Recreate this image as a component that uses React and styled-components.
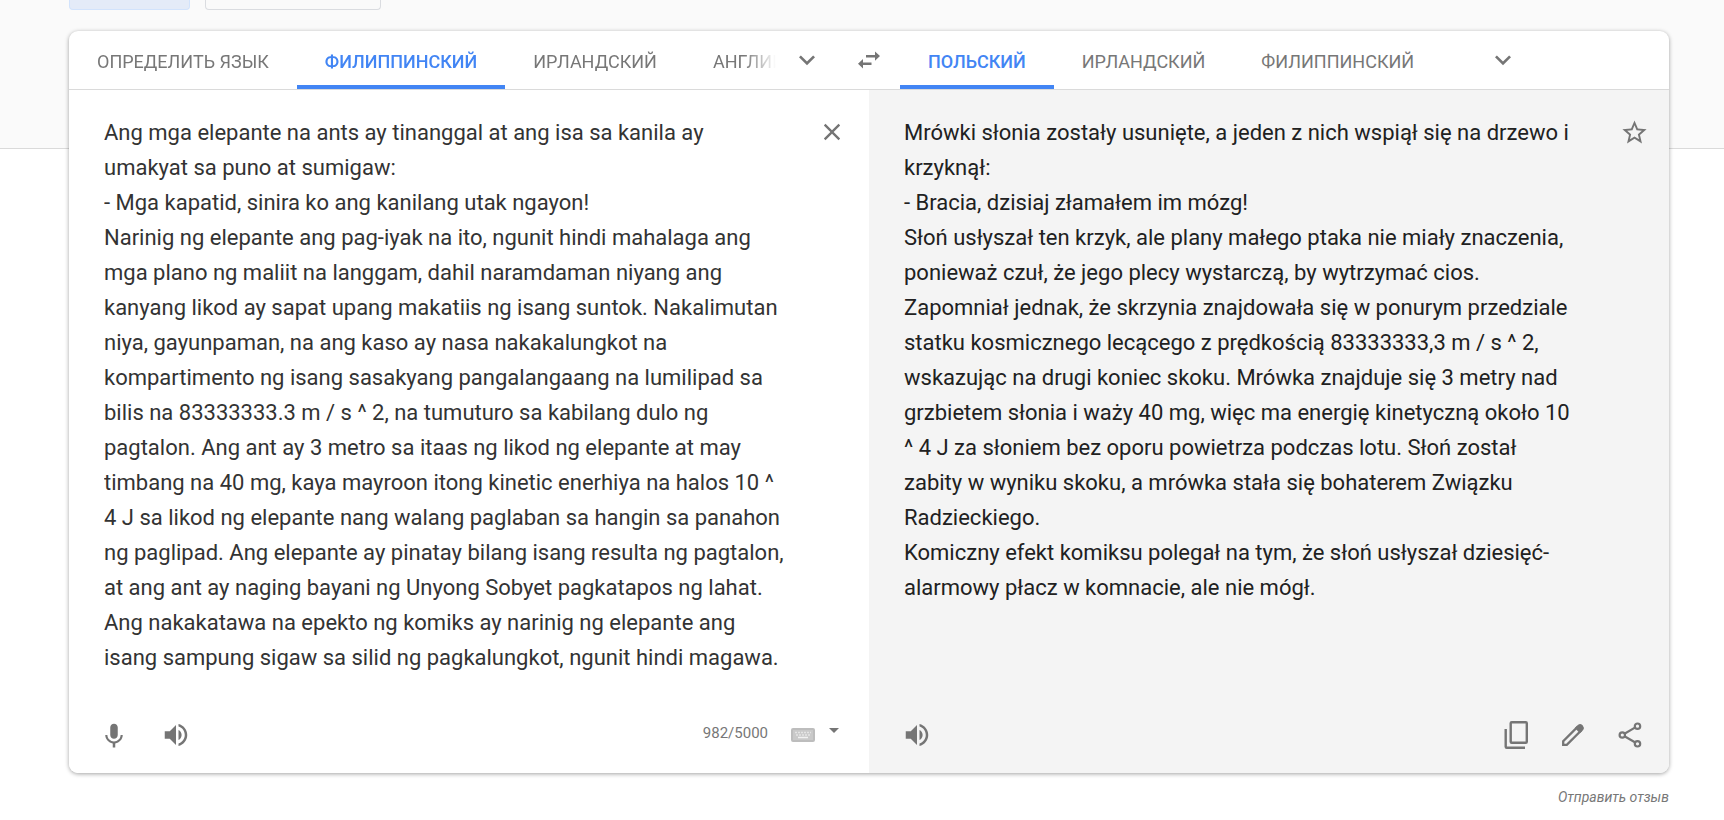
import React, { useState } from 'react';
import styled, { createGlobalStyle, css } from 'styled-components';

const SOURCE_TEXT = `Ang mga elepante na ants ay tinanggal at ang isa sa kanila ay umakyat sa puno at sumigaw:
- Mga kapatid, sinira ko ang kanilang utak ngayon!
Narinig ng elepante ang pag-iyak na ito, ngunit hindi mahalaga ang mga plano ng maliit na langgam, dahil naramdaman niyang ang kanyang likod ay sapat upang makatiis ng isang suntok. Nakalimutan niya, gayunpaman, na ang kaso ay nasa nakakalungkot na kompartimento ng isang sasakyang pangalangaang na lumilipad sa bilis na 83333333.3 m / s ^ 2, na tumuturo sa kabilang dulo ng pagtalon. Ang ant ay 3 metro sa itaas ng likod ng elepante at may timbang na 40 mg, kaya mayroon itong kinetic enerhiya na halos 10 ^ 4 J sa likod ng elepante nang walang paglaban sa hangin sa panahon ng paglipad. Ang elepante ay pinatay bilang isang resulta ng pagtalon, at ang ant ay naging bayani ng Unyong Sobyet pagkatapos ng lahat.
Ang nakakatawa na epekto ng komiks ay narinig ng elepante ang isang sampung sigaw sa silid ng pagkalungkot, ngunit hindi magawa.`;

const RESULT_TEXT = `Mrówki słonia zostały usunięte, a jeden z nich wspiął się na drzewo i krzyknął:
- Bracia, dzisiaj złamałem im mózg!
Słoń usłyszał ten krzyk, ale plany małego ptaka nie miały znaczenia, ponieważ czuł, że jego plecy wystarczą, by wytrzymać cios. Zapomniał jednak, że skrzynia znajdowała się w ponurym przedziale statku kosmicznego lecącego z prędkością 83333333,3 m / s ^ 2, wskazując na drugi koniec skoku. Mrówka znajduje się 3 metry nad grzbietem słonia i waży 40 mg, więc ma energię kinetyczną około 10 ^ 4 J za słoniem bez oporu powietrza podczas lotu. Słoń został zabity w wyniku skoku, a mrówka stała się bohaterem Związku Radzieckiego.
Komiczny efekt komiksu polegał na tym, że słoń usłyszał dziesięć-alarmowy płacz w komnacie, ale nie mógł.`;

const SOURCE_LANGS = ['ОПРЕДЕЛИТЬ ЯЗЫК', 'ФИЛИППИНСКИЙ', 'ИРЛАНДСКИЙ', 'АНГЛИЙСКИЙ'];
const TARGET_LANGS = ['ПОЛЬСКИЙ', 'ИРЛАНДСКИЙ', 'ФИЛИППИНСКИЙ'];

const VOLUME = 'M3 9v6h4l5 5V4L7 9H3zm13.5 3c0-1.77-1.02-3.29-2.5-4.03v8.05c1.48-.73 2.5-2.25 2.5-4.02zM14 3.23v2.06c2.89.86 5 3.54 5 6.71s-2.11 5.85-5 6.71v2.06c4.01-.91 7-4.49 7-8.77s-2.99-7.86-7-8.77z';
const MIC = 'M12 15c1.66 0 2.99-1.34 2.99-3L15 6c0-1.66-1.34-3-3-3S9 4.34 9 6v6c0 1.66 1.34 3 3 3zm5.3-3c0 3-2.54 5.1-5.3 5.1S6.7 15 6.7 12H5c0 3.42 2.72 6.23 6 6.72V22h2v-3.28c3.28-.48 6-3.3 6-6.72h-1.7z';
const CLOSE = 'M19 6.41L17.59 5 12 10.59 6.41 5 5 6.41 10.59 12 5 17.59 6.41 19 12 13.41 17.59 19 19 17.59 13.41 12z';
const STAR = 'M22 9.24l-7.19-.62L12 2 9.19 8.63 2 9.24l5.46 4.73L5.82 21 12 17.27 18.18 21l-1.63-7.03L22 9.24zM12 15.4l-3.76 2.27 1-4.28-3.32-2.88 4.38-.38L12 6.1l1.71 4.04 4.38.38-3.32 2.88 1 4.28L12 15.4z';
const CHEVRON = 'M7.41 8.59L12 13.17l4.59-4.58L18 10l-6 6-6-6 1.41-1.41z';

const Icon = ({ d, size = 30 }) => (
    <svg width={size} height={size} viewBox='0 0 24 24' fill='currentColor' aria-hidden='true'>
        <path d={d} />
    </svg>
);

const SwapIcon = () => (
    <svg width='24' height='18' viewBox='0 0 24 18' fill='currentColor' aria-hidden='true'>
        <path d='M9 4h9V.5L23 5l-5 4.800V6.400H9z' />
        <path d='M14.500 11.500H6V8L1 12.700l5 4.800V14h8.500z' />
    </svg>
);

const KeyboardIcon = () => (
    <svg width='24' height='14' viewBox='0 0 24 14' aria-hidden='true'>
        <rect x='1' y='1' width='22' height='12' rx='1' fill='#c9c9c9' stroke='#bdbdbd' strokeWidth='2' />
        <path d='M4 4.5h16M5 7h15' stroke='#e4e4e4' strokeWidth='1.500' strokeDasharray='2 1' />
        <path d='M7 9.5h10' stroke='#f1f1f1' strokeWidth='1.500' />
    </svg>
);

const CopyIcon = () => (
    <svg width='30' height='30' viewBox='0 0 30 30' fill='none' stroke='currentColor' strokeWidth='2.400' aria-hidden='true'>
        <rect x='9.700' y='2.200' width='16.100' height='20.600' rx='1' />
        <path d='M4.700 9v17.800q0 1 1 1H24' />
    </svg>
);

const PencilIcon = () => (
    <svg width='30' height='30' viewBox='0 0 30 30' fill='none' stroke='currentColor' strokeWidth='2.300' aria-hidden='true'>
        <path d='M5.200 24.800v-3.600L19 7.400l3.600 3.600L8.800 24.800z' />
        <path d='M16.800 8.100l3.300-3.300q2.200-1.600 4.200.3l.6.6q1.900 2 .3 4.200l-3.300 3.300z' fill='currentColor' stroke='none' />
    </svg>
);

const ShareIcon = () => (
    <svg width='30' height='30' viewBox='0 0 30 30' fill='none' stroke='currentColor' strokeWidth='2.200' aria-hidden='true'>
        <path d='M9.500 13.700l10.800-6.300M9.500 16.300l10.800 6.200' />
        <circle cx='7.300' cy='15' r='2.700' />
        <circle cx='22.500' cy='6.200' r='2.700' />
        <circle cx='22.500' cy='23.800' r='2.700' />
    </svg>
);

const App = () => {
    const [text, setText] = useState(SOURCE_TEXT);
    const [source, setSource] = useState(1);
    const [target, setTarget] = useState(0);

    return (
        <Page>
            <GlobalStyle />
            <TopBand>
                <ModeButton $width={121} $active aria-label='Текст' />
                <ModeButton $width={176} aria-label='Документы' />
            </TopBand>
            <Main>
                <Card>
                    <LangBar>
                        <LangSide>
                            <TabList $faded>
                                {SOURCE_LANGS.map((name, i) => (
                                    <Tab key={name} $active={i === source} onClick={() => setSource(i)}>{name}</Tab>
                                ))}
                            </TabList>
                            <MoreButton aria-label='Другие языки оригинала'><Icon d={CHEVRON} size={32} /></MoreButton>
                        </LangSide>
                        <SwapButton aria-label='Поменять языки местами'><SwapIcon /></SwapButton>
                        <LangSide $target>
                            <TabList>
                                {TARGET_LANGS.map((name, i) => (
                                    <Tab key={name} $active={i === target} onClick={() => setTarget(i)}>{name}</Tab>
                                ))}
                            </TabList>
                            <MoreButton aria-label='Другие языки перевода'><Icon d={CHEVRON} size={32} /></MoreButton>
                        </LangSide>
                    </LangBar>
                    <Panels>
                        <Panel>
                            <TextRow>
                                <SourceInput
                                    aria-label='Исходный текст'
                                    rows={16}
                                    spellCheck={false}
                                    value={text}
                                    onChange={(e) => setText(e.target.value)}
                                />
                                <IconButton aria-label='Очистить' onClick={() => setText('')}><Icon d={CLOSE} size={28} /></IconButton>
                            </TextRow>
                            <Footer>
                                <Tools $gap={28}>
                                    <IconButton aria-label='Голосовой ввод'><Icon d={MIC} /></IconButton>
                                    <IconButton aria-label='Прослушать оригинал'><Icon d={VOLUME} /></IconButton>
                                </Tools>
                                <InputInfo>
                                    <Counter>{text.length ? '982/5000' : '0/5000'}</Counter>
                                    <KeyboardButton aria-label='Экранная клавиатура'>
                                        <KeyboardIcon />
                                        <Caret />
                                    </KeyboardButton>
                                </InputInfo>
                            </Footer>
                        </Panel>
                        <Panel $result>
                            <TextRow $result>
                                <Result lang='pl'>{RESULT_TEXT}</Result>
                                <IconButton aria-label='Сохранить перевод'><Icon d={STAR} size={29} /></IconButton>
                            </TextRow>
                            <Footer $result>
                                <IconButton aria-label='Прослушать перевод'><Icon d={VOLUME} /></IconButton>
                                <Tools $gap={23}>
                                    <IconButton aria-label='Копировать перевод'><CopyIcon /></IconButton>
                                    <IconButton aria-label='Предложить исправление'><PencilIcon /></IconButton>
                                    <IconButton aria-label='Поделиться'><ShareIcon /></IconButton>
                                </Tools>
                            </Footer>
                        </Panel>
                    </Panels>
                </Card>
                <Feedback href='#feedback'>Отправить отзыв</Feedback>
            </Main>
        </Page>
    );
};

export default App;

const GlobalStyle = createGlobalStyle`
body{
    margin:0;
    background:#fff;
    font-family:Roboto, "Liberation Sans", sans-serif;
}

*{
    box-sizing:border-box;
}

button{
    font-family:inherit;
    padding:0;
    border:0;
    background:none;
    cursor:pointer;
}
`

const Page = styled.div`
min-height:100vh;
overflow:hidden;
`

const TopBand = styled.header`
display:flex;
align-items:flex-start;
gap:15px;
height:149px;
padding:0 55px 0 69px;
background:#fafafa;
border-bottom:1px solid #dadada;
`

const ModeButton = styled.button`
&&{
    width:${(p) => p.$width}px;
    height:10px;
    border:1px solid ${(p) => (p.$active ? '#d2e3fc' : '#dadce0')};
    border-top:0;
    border-radius:0 0 4px 4px;
    background:${(p) => (p.$active ? '#e4ebf8' : 'transparent')};
}
`

const Main = styled.main`
display:flex;
flex-direction:column;
margin-top:-118px;
padding:0 55px 0 69px;
`

const Card = styled.section`
position:relative;
overflow:hidden;
background:#fff;
border-radius:9px;
box-shadow:0 1px 4px rgba(0,0,0,0.37);
`

const LangBar = styled.div`
display:grid;
grid-template-columns:minmax(0, 1fr) 62px minmax(0, 1fr);
height:59px;
border-bottom:1px solid #dadada;
`

const LangSide = styled.div`
display:flex;
align-items:center;
height:58px;

${(p) => p.$target && css`
    justify-content:space-between;
    padding-right:135px;
`}
`

const TabList = styled.div`
display:flex;
height:100%;
min-width:0;
overflow:hidden;

${(p) => p.$faded && css`
    flex:1;
    mask-image:linear-gradient(to right, #000 calc(100% - 32px), transparent);
`}
`

const Tab = styled.button`
&&{
    flex:none;
    padding:2px 28px 0;
    font-size:18px;
    white-space:nowrap;
    color:${(p) => (p.$active ? '#4285f4' : '#777')};
    font-weight:${(p) => (p.$active ? 500 : 400)};
    border-top:4px solid transparent;
    border-bottom:4px solid ${(p) => (p.$active ? '#4285f4' : 'transparent')};
    border-left:0;
    border-right:0;
}
`

const MoreButton = styled.button`
display:flex;
flex:none;
justify-content:center;
width:62px;
color:#757575;
`

const SwapButton = styled.button`
display:flex;
align-items:center;
justify-content:center;
color:#757575;
`

const Panels = styled.div`
display:grid;
grid-template-columns:1fr 1fr;
`

const Panel = styled.div`
display:flex;
flex-direction:column;
justify-content:space-between;
min-width:0;
background:${(p) => (p.$result ? '#f4f4f4' : '#fff')};
color:${(p) => (p.$result ? '#212121' : '#333')};
`

const TextRow = styled.div`
display:flex;
align-items:flex-start;
gap:${(p) => (p.$result ? 40 : 28)}px;
padding:25px ${(p) => (p.$result ? 18 : 20)}px 0 35px;
`

const textStyle = css`
flex:1;
min-width:0;
margin:0;
font-size:22px;
line-height:35px;
white-space:pre-wrap;
`

const SourceInput = styled.textarea`
${textStyle}
display:block;
padding:0;
border:0;
outline:0;
resize:none;
overflow:hidden;
font-family:inherit;
color:inherit;
background:transparent;
`

const Result = styled.p`
${textStyle}
`

const IconButton = styled.button`
display:flex;
flex:none;
align-items:center;
justify-content:center;
width:34px;
height:34px;
color:#757575;
`

const Footer = styled.div`
display:flex;
align-items:center;
justify-content:space-between;
height:78px;
margin-top:20px;
padding:2px 22px 0 ${(p) => (p.$result ? 31 : 28)}px;
`

const Tools = styled.div`
display:flex;
gap:${(p) => p.$gap}px;
`

const InputInfo = styled.div`
display:flex;
align-items:center;
gap:23px;
padding:0 8px 4px 0;
`

const Counter = styled.span`
font-size:15px;
color:#777;
`

const KeyboardButton = styled.button`
display:flex;
align-items:flex-start;
gap:14px;
padding-top:4px;
`

const Caret = styled.span`
border:5px solid transparent;
border-top-color:#757575;
border-bottom:0;
`

const Feedback = styled.a`
align-self:flex-end;
margin-top:15px;
font-size:14px;
line-height:18px;
font-style:italic;
color:#777;
text-decoration:none;
`
